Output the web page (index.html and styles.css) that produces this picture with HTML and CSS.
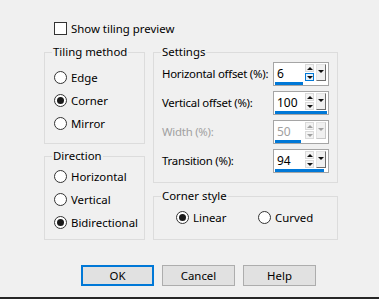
FILE: index.html
```html
<!DOCTYPE html>
<html lang="en">
<head>
    <meta charset="UTF-8">
    <title>Tiling</title>
    <link rel="stylesheet" href="styles.css">
</head>
<body>
    <div class="dialog">
        <label class="check-row"><span class="checkbox"></span>Show tiling preview</label>

        <div class="columns">
            <div class="col col-left">
                <fieldset class="group group-tiling">
                    <legend>Tiling method</legend>
                    <div class="group-body">
                        <div class="radio-row"><span class="radio"></span>Edge</div>
                        <div class="radio-row"><span class="radio checked"></span>Corner</div>
                        <div class="radio-row"><span class="radio"></span>Mirror</div>
                    </div>
                </fieldset>
                <fieldset class="group group-direction">
                    <legend>Direction</legend>
                    <div class="group-body">
                        <div class="radio-row"><span class="radio"></span>Horizontal</div>
                        <div class="radio-row"><span class="radio"></span>Vertical</div>
                        <div class="radio-row"><span class="radio checked"></span>Bidirectional</div>
                    </div>
                </fieldset>
            </div>

            <div class="col col-right">
                <fieldset class="group group-settings">
                    <legend>Settings</legend>
                    <div class="group-body">
                        <div class="field-row">
                            <span class="field-label">Horizontal offset (%):</span>
                            <div class="spinner">
                                <div class="spin-top">
                                    <span class="spin-value">6</span>
                                    <span class="spin-arrows"><span class="arrow up"></span><span class="arrow down hover"></span></span>
                                    <span class="spin-drop"></span>
                                </div>
                                <div class="spin-track"><div class="spin-bar" style="width: 53%"></div></div>
                            </div>
                        </div>
                        <div class="field-row">
                            <span class="field-label">Vertical offset (%):</span>
                            <div class="spinner">
                                <div class="spin-top">
                                    <span class="spin-value">100</span>
                                    <span class="spin-arrows"><span class="arrow up"></span><span class="arrow down"></span></span>
                                    <span class="spin-drop"></span>
                                </div>
                                <div class="spin-track"><div class="spin-bar" style="width: 100%"></div></div>
                            </div>
                        </div>
                        <div class="field-row disabled">
                            <span class="field-label">Width (%):</span>
                            <div class="spinner">
                                <div class="spin-top">
                                    <span class="spin-value">50</span>
                                    <span class="spin-arrows"><span class="arrow up"></span><span class="arrow down"></span></span>
                                    <span class="spin-drop"></span>
                                </div>
                                <div class="spin-track"><div class="spin-bar" style="width: 50%"></div></div>
                            </div>
                        </div>
                        <div class="field-row">
                            <span class="field-label">Transition (%):</span>
                            <div class="spinner">
                                <div class="spin-top">
                                    <span class="spin-value">94</span>
                                    <span class="spin-arrows"><span class="arrow up"></span><span class="arrow down"></span></span>
                                    <span class="spin-drop"></span>
                                </div>
                                <div class="spin-track"><div class="spin-bar" style="width: 94%"></div></div>
                            </div>
                        </div>
                    </div>
                </fieldset>
                <fieldset class="group group-corner">
                    <legend>Corner style</legend>
                    <div class="group-body">
                        <div class="radio-row linear"><span class="radio checked"></span>Linear</div>
                        <div class="radio-row"><span class="radio"></span>Curved</div>
                    </div>
                </fieldset>
            </div>
        </div>

        <div class="buttons">
            <button class="btn btn-default">OK</button>
            <button class="btn">Cancel</button>
            <button class="btn">Help</button>
        </div>

        <div class="bottom-edge"></div>
    </div>
</body>
</html>
```

FILE: styles.css
```css
body {
    margin: 0;
    background-color: #f0f0f0;
    font-family: "Noto Sans", "Open Sans", sans-serif;
    font-size: 11.4px;
    color: #000;
    overflow: hidden;
}
.dialog {
    height: 299px;
    display: flex;
    flex-direction: column;
    padding-top: 22px;
    box-sizing: border-box;
}
.check-row {
    display: flex;
    align-items: center;
    gap: 4px;
    height: 13px;
    padding-left: 54px;
}
.checkbox {
    width: 13px;
    height: 13px;
    box-sizing: border-box;
    border: 1px solid #333;
    background-color: #fff;
}
.columns {
    display: flex;
    gap: 8px;
    margin-top: 9px;
    padding-left: 44px;
}
.col {
    display: flex;
    flex-direction: column;
}
.col-left {
    width: 101px;
    gap: 4px;
}
.col-right {
    width: 185px;
    gap: 5px;
}
.group {
    margin: 0;
    padding: 0 0 0 9px;
    border: 1px solid #dcdcdc;
    min-width: 0;
    box-sizing: border-box;
}
.group legend {
    padding: 0 1px;
    margin-left: -2px;
    line-height: 16px;
    height: 16px;
}
.group-tiling { height: 100px; }
.group-tiling .group-body { padding-top: 6px; }
.group-direction { height: 92px; }
.group-direction .group-body { padding-top: 1px; }
.group-settings { height: 139px; }
.group-settings .group-body {
    padding-top: 2px;
    padding-right: 8px;
    display: flex;
    flex-direction: column;
    gap: 5px;
}
.group-corner { height: 52px; }
.group-corner .group-body {
    padding-top: 2px;
    padding-left: 13px;
    display: flex;
}

/* radio buttons */
.radio-row {
    display: flex;
    align-items: center;
    gap: 4px;
    height: 23px;
}
.radio-row.linear {
    width: 82px;
}
.radio {
    width: 13px;
    height: 13px;
    box-sizing: border-box;
    border: 1px solid #333;
    border-radius: 50%;
    background-color: #fff;
    display: flex;
    align-items: center;
    justify-content: center;
    flex-shrink: 0;
}
.radio.checked::after {
    content: "";
    width: 7px;
    height: 7px;
    border-radius: 50%;
    background-color: #1a1a1a;
}

/* numeric fields */
.field-row {
    display: flex;
    align-items: center;
    height: 24px;
}
.field-label {
    flex: 1;
    margin-left: -1px;
    padding-bottom: 2px;
    white-space: nowrap;
    letter-spacing: -0.25px;
}
.field-row.disabled .field-label {
    color: #a0a0a0;
}
.spinner {
    width: 56px;
    height: 24px;
    flex-shrink: 0;
    box-sizing: border-box;
    border: 1px solid #a5a5a5;
    background-color: #fff;
    padding-top: 1px;
}
.spin-top {
    display: flex;
    height: 17px;
}
.spin-value {
    flex: 1;
    padding-left: 3px;
    font-size: 12px;
    line-height: 19px;
}
.disabled .spin-value {
    color: #a0a0a0;
}
.spin-arrows {
    width: 9px;
    display: flex;
    flex-direction: column;
    gap: 1px;
}
.arrow {
    height: 8px;
    box-sizing: border-box;
    border: 1px solid #dadada;
    background-color: #f3f3f3;
    display: flex;
    align-items: center;
    justify-content: center;
}
.arrow::after {
    content: "";
    border-left: 3px solid transparent;
    border-right: 3px solid transparent;
}
.arrow.up::after {
    border-bottom: 3px solid #111;
}
.arrow.down::after {
    border-top: 3px solid #111;
}
.arrow.hover {
    border-color: #0078d7;
    background-color: #e5f1fb;
}
.disabled .arrow.up::after { border-bottom-color: #a0a0a0; }
.disabled .arrow.down::after { border-top-color: #a0a0a0; }
.spin-drop {
    width: 10px;
    margin-left: 2px;
    margin-right: 2px;
    box-sizing: border-box;
    border: 1px solid #e3e3e3;
    border-right-color: #6d6d6d;
    border-bottom-color: #6d6d6d;
    background-color: #f0f0f0;
    display: flex;
    justify-content: center;
    padding-top: 5px;
}
.spin-drop::after {
    content: "";
    height: 0;
    border-left: 3px solid transparent;
    border-right: 3px solid transparent;
    border-top: 3px solid #111;
}
.disabled .spin-drop {
    border-right-color: #c8c8c8;
    border-bottom-color: #c8c8c8;
}
.disabled .spin-drop::after {
    border-top-color: #a0a0a0;
}
.spin-track {
    margin: 1px 1px 0 1px;
    height: 3px;
}
.spin-bar {
    height: 3px;
    background-color: #0078d7;
}

/* dialog buttons */
.buttons {
    display: flex;
    gap: 8px;
    margin-top: 25px;
    padding-left: 81px;
}
.btn {
    width: 73px;
    height: 21px;
    padding: 0;
    border: 1px solid #adadad;
    background-color: #e1e1e1;
    font-family: inherit;
    font-size: inherit;
    color: #000;
}
.btn-default {
    border: 2px solid #0078d7;
}
.bottom-edge {
    margin-top: auto;
    height: 2px;
    background-color: #262626;
}
```
